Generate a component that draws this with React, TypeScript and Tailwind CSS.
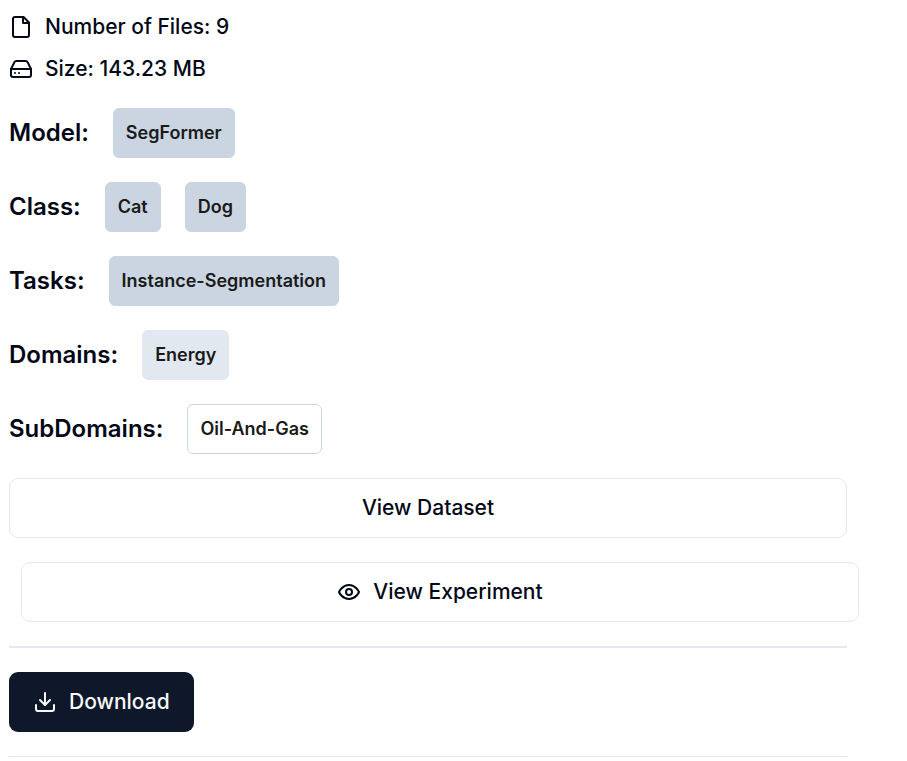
import React from "react";
import { HardDrive, Download } from "lucide-react";

type Variant = "filled" | "soft" | "outline";

const variants: Record<Variant, string> = {
  filled: "border-[#cbd5e1] bg-[#cbd5e1]",
  soft: "border-[#e2e8f0] bg-[#e2e8f0]",
  outline: "border-[#cbd5e1] bg-white",
};

function Icon({ children }: { children: React.ReactNode }) {
  return (
    <svg
      width="24"
      height="24"
      viewBox="0 0 24 24"
      fill="none"
      stroke="currentColor"
      strokeWidth="2"
      strokeLinecap="round"
      strokeLinejoin="round"
    >
      {children}
    </svg>
  );
}

function FileIcon() {
  return (
    <Icon>
      <path d="M14.5 2H6a2 2 0 0 0-2 2v16a2 2 0 0 0 2 2h12a2 2 0 0 0 2-2V7.5L14.5 2z" />
      <polyline points="14 2 14 8 20 8" />
    </Icon>
  );
}

function EyeIcon() {
  return (
    <Icon>
      <path d="M2 12s3-7 10-7 10 7 10 7-3 7-10 7-10-7-10-7Z" />
      <circle cx="12" cy="12" r="3" />
    </Icon>
  );
}

function Tag({ label, variant = "filled" }: { label: string; variant?: Variant }) {
  return (
    <span
      className={`flex h-[50px] items-center rounded-md border px-3 text-[18px] font-semibold text-[#1a1a1a] ${variants[variant]}`}
    >
      {label}
    </span>
  );
}

function Row({ title, tags, variant }: { title: string; tags: string[]; variant?: Variant }) {
  return (
    <div className="flex items-center gap-6">
      <h3 className="text-[24px] leading-9 font-semibold">{title}</h3>
      {tags.map((tag) => (
        <Tag key={tag} label={tag} variant={variant} />
      ))}
    </div>
  );
}

export default function App() {
  return (
    <main className="h-[761px] overflow-hidden bg-white pt-3 pl-[9px] font-['Inter',sans-serif] text-[21px] leading-[30px] font-medium text-[#020817]">
      <div className="flex w-[838px] flex-col gap-6">
        <div className="flex flex-col gap-3">
          <div className="flex items-center gap-3">
            <FileIcon />
            <span>Number of Files: 9</span>
          </div>
          <div className="flex items-center gap-3">
            <HardDrive size={24} />
            <span>Size: 143.23 MB</span>
          </div>
        </div>
        <Row title="Model:" tags={["SegFormer"]} />
        <Row title="Class:" tags={["Cat", "Dog"]} />
        <Row title="Tasks:" tags={["Instance-Segmentation"]} />
        <Row title="Domains:" tags={["Energy"]} variant="soft" />
        <Row title="SubDomains:" tags={["Oil-And-Gas"]} variant="outline" />
        <button className="flex h-[60px] w-full items-center justify-center rounded-[9px] border border-[#e2e8f0]">
          View Dataset
        </button>
        <button className="ml-3 flex h-[60px] w-full items-center justify-center gap-3 rounded-[9px] border border-[#e2e8f0]">
          <EyeIcon />
          View Experiment
        </button>
        <div className="h-[2px] w-full bg-[#e2e8f0]" />
        <button className="flex h-[60px] w-[185px] items-center gap-3 rounded-[9px] bg-[#0f172a] px-6 text-[#f8fafc]">
          <Download size={24} />
          Download
        </button>
        <div className="h-px w-full bg-[#e2e8f0]" />
      </div>
    </main>
  );
}
